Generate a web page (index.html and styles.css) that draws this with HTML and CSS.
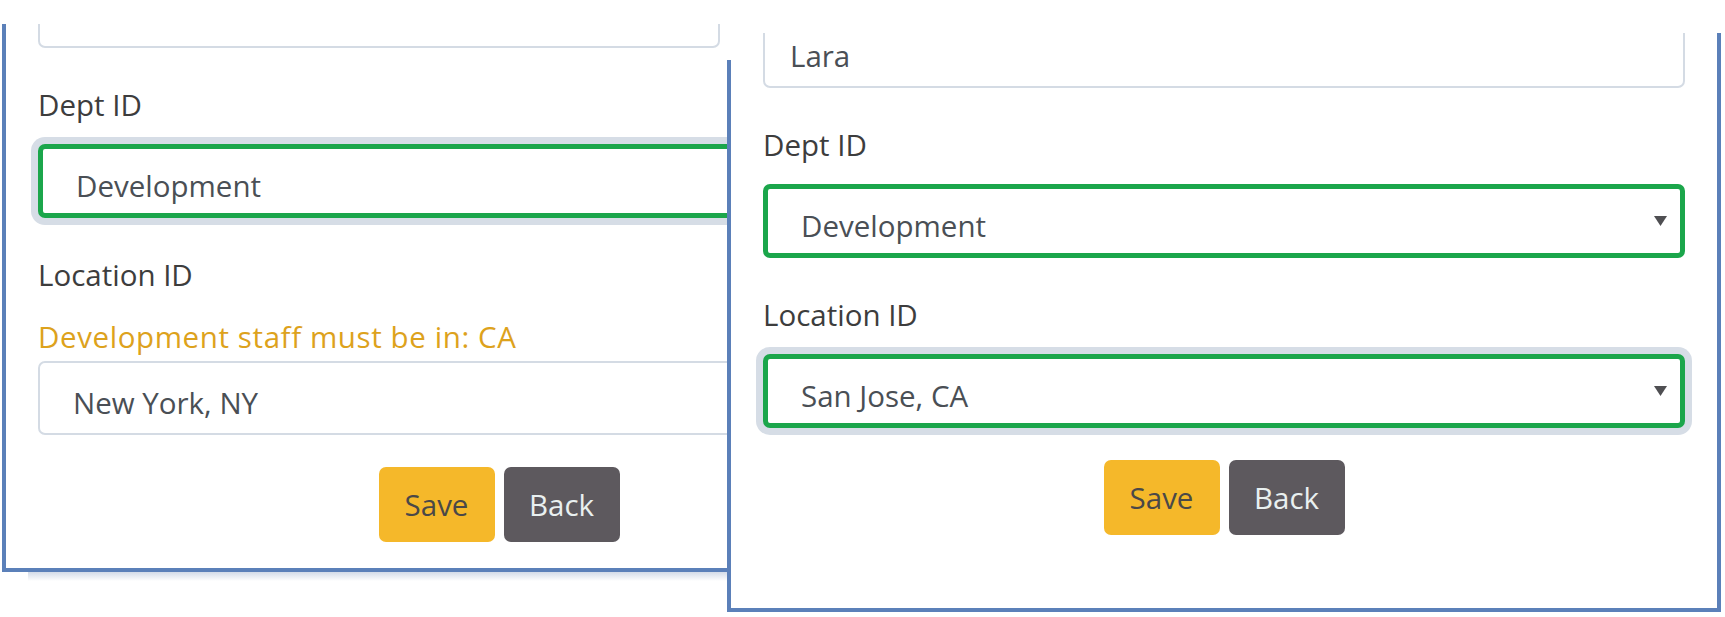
FILE: index.html
```html
<!DOCTYPE html>
<html lang="en">
<head>
<meta charset="utf-8">
<title>Employee form – before and after</title>
<link rel="stylesheet" href="styles.css">
</head>
<body>
<div class="desk">
  <section class="shot shot-a">
    <div class="clip">
      <form class="form">
        <div class="group">
          <div class="field input field-cut"></div>
        </div>
        <div class="group">
          <label class="label">Dept ID</label>
          <div class="field select valid focus">
            <span class="value">Development</span>
            <svg class="caret" width="13" height="10" viewBox="0 0 13 10"><polygon points="0,0 13,0 6.5,10"/></svg>
          </div>
        </div>
        <div class="group group-last">
          <label class="label">Location ID</label>
          <div class="warn">Development staff must be in: CA</div>
          <div class="field select">
            <span class="value">New York, NY</span>
            <svg class="caret" width="13" height="10" viewBox="0 0 13 10"><polygon points="0,0 13,0 6.5,10"/></svg>
          </div>
        </div>
        <div class="actions">
          <button type="button" class="btn btn-save">Save</button>
          <button type="button" class="btn btn-back">Back</button>
        </div>
      </form>
    </div>
  </section>

  <section class="shot shot-b">
    <div class="clip">
      <form class="form">
        <div class="group">
          <div class="field input"><span class="value">Lara</span></div>
        </div>
        <div class="group">
          <label class="label">Dept ID</label>
          <div class="field select valid">
            <span class="value">Development</span>
            <svg class="caret" width="13" height="10" viewBox="0 0 13 10"><polygon points="0,0 13,0 6.5,10"/></svg>
          </div>
        </div>
        <div class="group group-last">
          <label class="label">Location ID</label>
          <div class="field select valid focus">
            <span class="value">San Jose, CA</span>
            <svg class="caret" width="13" height="10" viewBox="0 0 13 10"><polygon points="0,0 13,0 6.5,10"/></svg>
          </div>
        </div>
        <div class="actions">
          <button type="button" class="btn btn-save">Save</button>
          <button type="button" class="btn btn-back">Back</button>
        </div>
      </form>
    </div>
  </section>
</div>
</body>
</html>
```

FILE: styles.css
```css
html, body {
  margin: 0;
  padding: 0;
  background: #ffffff;
}

body {
  font-family: "Open Sans", "Noto Sans", sans-serif;
  font-size: 29.5px;
  line-height: 45px;
  color: #3d3d3d;
}

.desk {
  position: relative;
  width: 1725px;
  height: 617px;
  overflow: hidden;
  background: #ffffff;
}

/* each screenshot is a window placed on the canvas */
.shot {
  position: absolute;
  box-sizing: border-box;
  width: 994px;
  background: #ffffff;
  border: 4px solid #5b80b9;
  border-top: 0;
}

.shot-a {
  left: 2px;
  top: 24px;
  height: 548px;
  z-index: 1;
  border-right-color: transparent;
}

/* soft drop shade under the first screenshot */
.shot-a::after {
  content: "";
  position: absolute;
  left: 22px;
  right: -4px;
  bottom: -13px;
  height: 9px;
  background: linear-gradient(rgba(176, 190, 214, 0.55), rgba(176, 190, 214, 0));
}

.shot-b {
  left: 727px;
  top: 33px;
  height: 579px;
  z-index: 2;
  border-left-color: transparent;
}

.shot-b::before {
  content: "";
  position: absolute;
  left: -4px;
  top: 27px;
  bottom: -4px;
  width: 4px;
  background: #5b80b9;
}

.clip {
  box-sizing: border-box;
  height: 100%;
  overflow: hidden;
  padding: 0 32px;
}

.shot-a .form {
  margin-top: -50px;
}

.shot-b .form {
  margin-top: -19px;
}

.form {
  display: flex;
  flex-direction: column;
}

.group {
  display: flex;
  flex-direction: column;
  margin-bottom: 34px;
}

.group-last {
  margin-bottom: 32px;
}

.label {
  display: block;
  margin-bottom: 17px;
  color: #3d3d3d;
}

.warn {
  color: #dda21c;
  letter-spacing: 0.6px;
  margin-bottom: 2px;
}

.field {
  box-sizing: border-box;
  height: 74px;
  display: flex;
  align-items: center;
  border: 2px solid #d4dbe4;
  border-radius: 7px;
  background: #ffffff;
  color: #4a4f55;
  padding: 8px 13px 0 25px;
}

.field-cut {
  margin-right: 240px;
}

.field.select {
  padding-left: 33px;
}

.field.valid {
  border: 5px solid #1ba64b;
}

.field.focus {
  box-shadow: 0 0 0 7px #d6dde6;
}

.value {
  white-space: nowrap;
}

.caret {
  margin-left: auto;
  margin-top: -8px;
  fill: #4f4f52;
  flex: none;
}

.actions {
  display: flex;
  justify-content: center;
  gap: 9px;
}

.btn {
  box-sizing: border-box;
  height: 75px;
  min-width: 116px;
  padding: 0 24px;
  border: 0;
  border-radius: 7px;
  font-family: inherit;
  font-size: 29.5px;
  line-height: 45px;
  cursor: pointer;
}

.btn-save {
  background: #f5b82a;
  color: #4a4848;
}

.btn-back {
  background: #5d595e;
  color: #e9f0f0;
}
```
